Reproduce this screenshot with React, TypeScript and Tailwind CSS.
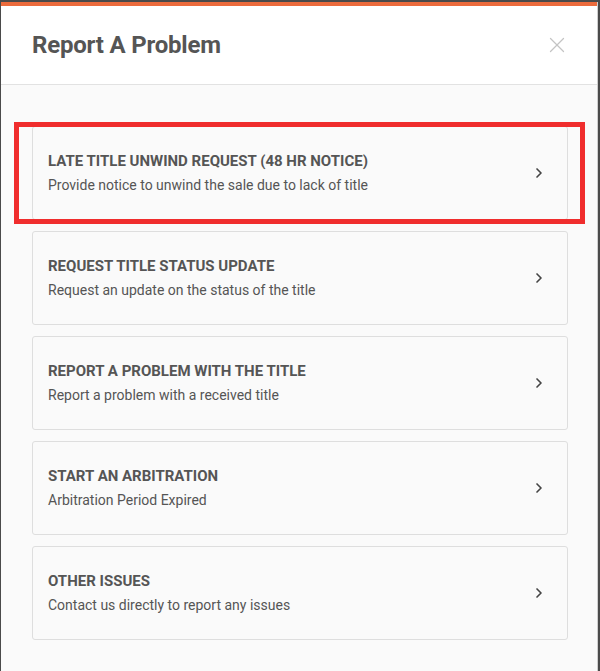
import { X, ChevronRight } from "lucide-react";

type Issue = {
	title: string;
	description: string;
};

const issues: Issue[] = [
	{ title: "Late Title Unwind Request (48 HR Notice)", description: "Provide notice to unwind the sale due to lack of title" },
	{ title: "Request Title Status Update", description: "Request an update on the status of the title" },
	{ title: "Report A Problem With The Title", description: "Report a problem with a received title" },
	{ title: "Start An Arbitration", description: "Arbitration Period Expired" },
	{ title: "Other Issues", description: "Contact us directly to report any issues" },
];

function IssueCard({ issue }: { issue: Issue }) {
	return (
		<button className="flex items-center justify-between w-full h-[94px] pl-[15px] pr-[20px] border border-[#dedede] rounded-[3px] bg-[#fafafa] text-left">
			<div className="flex flex-col gap-1">
				<div className="text-[15px]/[20px] font-bold uppercase text-[#555]">{issue.title}</div>
				<div className="text-[14px]/[20px] text-[#555]">{issue.description}</div>
			</div>
			<ChevronRight className="size-[16px] text-[#444]" strokeWidth={2.5} />
		</button>
	);
}

export default function App() {
	return (
		<div className="w-[600px] h-[671px] bg-[#4a4a4a] pt-[2px] pl-[1px] pr-[2px] overflow-hidden font-['Roboto',sans-serif]">
			<div className="relative flex flex-col h-full bg-[#fafafa] border-r border-[#cfcfcf]">
				<div className="h-[4px] bg-[#ec6b3c]" />
				<div className="flex items-center justify-between h-[79px] pl-[31px] pr-[27px] bg-white border-b border-[#e2e2e2]">
					<h1 className="text-[24px] font-bold text-[#555] tracking-[-0.2px]">Report A Problem</h1>
					<X className="size-[26px] text-[#c4c4c4]" strokeWidth={1.2} />
				</div>
				<div className="flex flex-col gap-[11px] pt-[41px] pl-[31px] pr-[29px]">
					{issues.map((issue) => (
						<IssueCard key={issue.title} issue={issue} />
					))}
				</div>
				{/* highlight around the first option */}
				<div className="absolute left-[13px] top-[120px] w-[571px] h-[102px] border-[5px] border-[#f02d2d] pointer-events-none" />
			</div>
		</div>
	);
}
